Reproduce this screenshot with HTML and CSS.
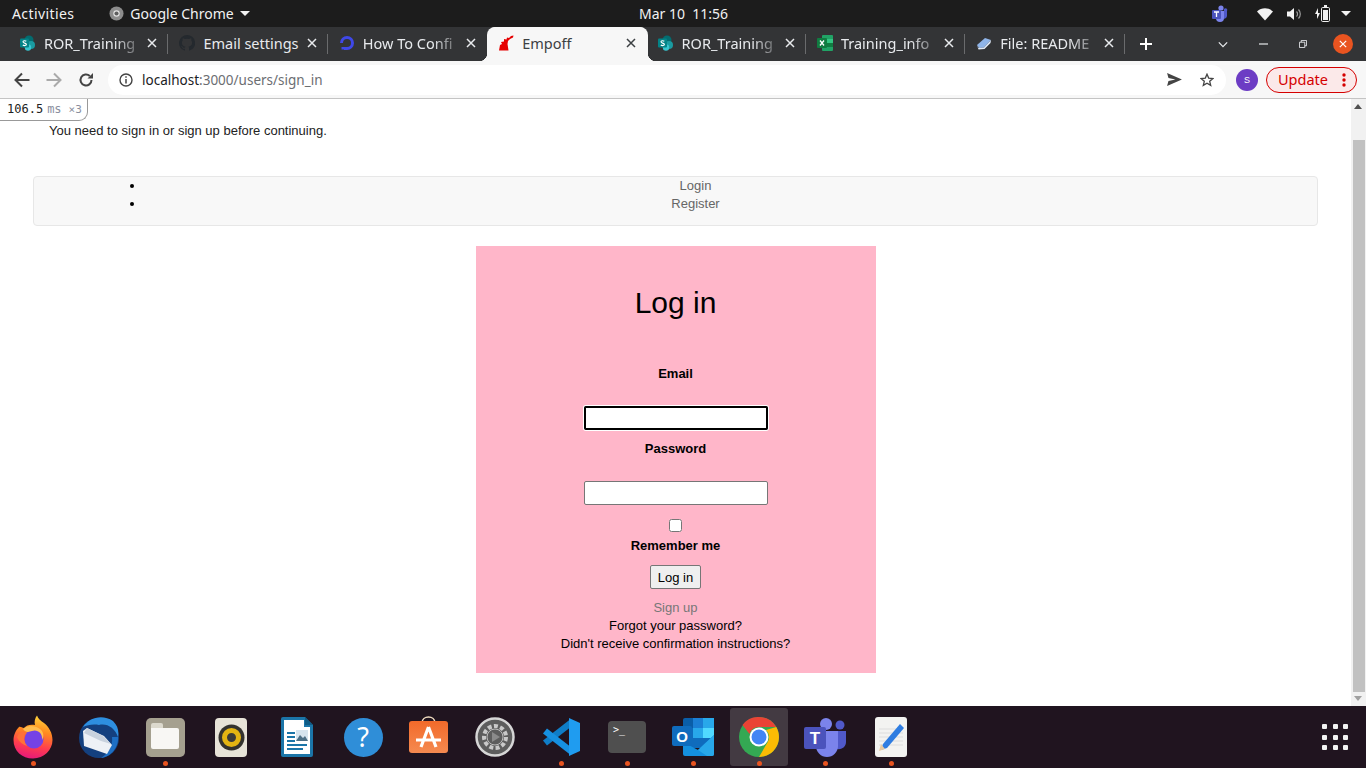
FILE: index.html
```html
<!DOCTYPE html>
<html lang="en">
<head>
    <meta charset="UTF-8">
    <meta name="viewport" content="width=device-width, initial-scale=1.0">
    <title>Empoff</title>
    <link rel="stylesheet" href="styles.css">
</head>
<body>
    <svg class="defs" width="0" height="0">
        <defs>
            <linearGradient id="ff-body" x1="0.6" y1="0" x2="0.4" y2="1">
                <stop offset="0" stop-color="#ffd23a"/>
                <stop offset="0.35" stop-color="#ff8a1f"/>
                <stop offset="0.7" stop-color="#ff3d4f"/>
                <stop offset="1" stop-color="#e5197a"/>
            </linearGradient>
            <linearGradient id="store-bag" x1="0" y1="0" x2="0" y2="1">
                <stop offset="0" stop-color="#f26a2a"/>
                <stop offset="1" stop-color="#f58a50"/>
            </linearGradient>
        </defs>
        <symbol id="fav-sharepoint" viewBox="0 0 16 16">
            <circle cx="9" cy="5" r="4.5" fill="#036c70"/>
            <circle cx="11" cy="10" r="4" fill="#1a9ba1"/>
            <circle cx="8" cy="12.5" r="3.2" fill="#37c6d0"/>
            <rect x="0" y="3.5" width="9" height="9" rx="1" fill="#038387"/>
            <path d="M6.300 6.200C5.300 5.400 3 5.500 3 6.800c0 1.600 3.400 1 3.400 2.700 0 1.300-2.400 1.400-3.600.5" stroke="#fff" stroke-width="1.100" fill="none"/>
        </symbol>
        <symbol id="icon-close" viewBox="0 0 10 10">
            <path d="M1 1l8 8M9 1l-8 8" stroke="currentColor" stroke-width="1.5" fill="none"/>
        </symbol>
    </svg>

    <div class="topbar">
        <span class="activities">Activities</span>
        <div class="app-menu">
            <svg width="15" height="15" viewBox="0 0 16 16"><circle cx="8" cy="8" r="7.5" fill="#8d8d8d"/><circle cx="8" cy="8" r="3.4" fill="#e4e4e4"/><circle cx="8" cy="8" r="2.2" fill="#5e5e5e"/></svg>
            <span>Google Chrome</span>
            <span class="caret"></span>
        </div>
        <div class="clock">Mar 10&nbsp;&nbsp;11:56</div>
        <div class="tray">
            <svg class="tray-teams" width="17" height="17" viewBox="0 0 17 17"><circle cx="10" cy="3" r="2.6" fill="#7b83eb"/><circle cx="14.5" cy="5" r="1.8" fill="#5059c9"/><path d="M11 6h5v5a3 3 0 0 1-5 2z" fill="#5059c9"/><path d="M5 6h8v7a4 4 0 0 1-8 0z" fill="#7b83eb"/><rect x="1" y="5" width="9" height="9" rx="1" fill="#4b53bc"/><path d="M3 7h5M5.500 7v5" stroke="#fff" stroke-width="1.300"/></svg>
            <svg class="tray-wifi" width="16" height="14" viewBox="0 0 16 14"><path d="M0 4.500C4.500 .2 11.500 .2 16 4.500L8 13.500z" fill="#f2f2f2"/></svg>
            <svg class="tray-sound" width="15" height="14" viewBox="0 0 15 14"><path d="M0 4.500h3L7 1v12L3 9.500H0z" fill="#f2f2f2"/><path d="M9.500 4.500a3.500 3.500 0 0 1 0 5M11.500 2.500a6.500 6.500 0 0 1 0 9" stroke="#9a9a9a" stroke-width="1.200" fill="none"/></svg>
            <svg class="tray-battery" width="15" height="17" viewBox="0 0 15 17"><path d="M3 3L0 9h2v5l3-6H3z" fill="#f2f2f2"/><rect x="6.500" y="2.500" width="8" height="14" rx="1.200" fill="none" stroke="#f2f2f2"/><rect x="9" y="0" width="3" height="2" fill="#f2f2f2"/><rect x="8" y="5" width="5" height="10" fill="#f2f2f2"/></svg>
            <span class="caret"></span>
        </div>
    </div>

    <div class="tabbar">
        <div class="tab">
            <svg class="favicon" width="16" height="16"><use href="#fav-sharepoint"/></svg>
            <span class="tab-title tab-fade">ROR_Training</span>
            <svg class="tab-close" width="10" height="10"><use href="#icon-close"/></svg>
        </div>
        <div class="tab">
            <svg class="favicon" width="16" height="16" viewBox="0 0 16 16"><path d="M8 0a8 8 0 0 0-2.500 15.600c.4.1.5-.2.5-.4v-1.400c-2.200.5-2.700-1-2.700-1-.4-.9-.9-1.200-.9-1.200-.7-.5.1-.5.1-.5.8.1 1.200.8 1.200.8.7 1.200 1.900.9 2.300.7.1-.5.300-.9.500-1.100-1.800-.2-3.600-.9-3.600-4 0-.9.300-1.600.8-2.100-.1-.2-.4-1 .1-2.100 0 0 .7-.2 2.200.8a7.600 7.600 0 0 1 4 0c1.500-1 2.200-.8 2.200-.8.4 1.100.2 1.900.1 2.100.5.600.8 1.300.8 2.100 0 3.100-1.900 3.800-3.700 4 .3.300.6.800.6 1.500v2.200c0 .2.100.5.600.4A8 8 0 0 0 8 0z" fill="#24292e"/></svg>
            <span class="tab-title">Email settings</span>
            <svg class="tab-close" width="10" height="10"><use href="#icon-close"/></svg>
        </div>
        <div class="tab">
            <svg class="favicon" width="16" height="16" viewBox="0 0 16 16"><path d="M8 15V12A4 4 0 1 0 4 8H1A7 7 0 1 1 8 15z" fill="#3f48e8"/><path d="M5 12h3v3H5zM2.500 12H5v2.500H2.500z" fill="#3f48e8"/></svg>
            <span class="tab-title tab-fade">How To Confi</span>
            <svg class="tab-close" width="10" height="10"><use href="#icon-close"/></svg>
        </div>
        <div class="tab tab-active">
            <svg class="favicon" width="16" height="16" viewBox="0 0 16 16"><path d="M1 15.500L2 10l2-1-1-2 3-.5V4l2.500.5L9 2.500l2 .5 2-2 2.500-.5-.5 2-3 1.500-2 2-.5 3 1 6.500z" fill="#e60000"/></svg>
            <span class="tab-title">Empoff</span>
            <svg class="tab-close" width="10" height="10"><use href="#icon-close"/></svg>
        </div>
        <div class="tab">
            <svg class="favicon" width="16" height="16"><use href="#fav-sharepoint"/></svg>
            <span class="tab-title tab-fade">ROR_Training</span>
            <svg class="tab-close" width="10" height="10"><use href="#icon-close"/></svg>
        </div>
        <div class="tab">
            <svg class="favicon" width="16" height="16" viewBox="0 0 16 16"><rect x="5" y="0" width="11" height="16" rx="1" fill="#21a366"/><rect x="10" y="4" width="6" height="4" fill="#33c481"/><rect x="10" y="8" width="6" height="4" fill="#107c41"/><rect x="0" y="3" width="10" height="10" rx="1" fill="#107c41"/><path d="M3 5.500l4 5M7 5.500l-4 5" stroke="#fff" stroke-width="1.300"/></svg>
            <span class="tab-title tab-fade">Training_info</span>
            <svg class="tab-close" width="10" height="10"><use href="#icon-close"/></svg>
        </div>
        <div class="tab">
            <svg class="favicon" width="16" height="16" viewBox="0 0 16 16"><path d="M1 10L9 3l6 2-7 7.500-5 .5z" fill="#8fb4e8"/><path d="M1 10l1.500 3 5.500-.5L15 5l-.5 3-6 6-6 .5z" fill="#dfe8f5"/></svg>
            <span class="tab-title tab-fade">File: README</span>
            <svg class="tab-close" width="10" height="10"><use href="#icon-close"/></svg>
        </div>
        <svg class="new-tab" width="14" height="14" viewBox="0 0 14 14"><path d="M7 1v12M1 7h12" stroke="#fff" stroke-width="2"/></svg>
        <div class="window-controls">
            <svg width="10" height="7" viewBox="0 0 12 8"><path d="M1 1.500l5 5 5-5" stroke="#e8eaed" stroke-width="1.500" fill="none"/></svg>
            <svg width="9" height="2" viewBox="0 0 9 2"><path d="M0 1h9" stroke="#e8eaed" stroke-width="1.200"/></svg>
            <svg width="8" height="8" viewBox="0 0 9 9"><path d="M.5 2.500h6v6h-6zM2.500 2.500v-2h6v6h-2" stroke="#e8eaed" fill="none"/></svg>
            <div class="win-close"><svg width="8" height="8"><use href="#icon-close"/></svg></div>
        </div>
    </div>

    <div class="toolbar">
        <svg class="nav-icon" width="16" height="16" viewBox="0 0 16 16"><path d="M15.500 8H2M8 1.500L1.500 8 8 14.500" stroke="#444" stroke-width="2" fill="none"/></svg>
        <svg class="nav-icon" width="16" height="16" viewBox="0 0 16 16"><path d="M.5 8H14M8 1.500L14.500 8 8 14.500" stroke="#aaa" stroke-width="2" fill="none"/></svg>
        <svg class="nav-icon" width="16" height="16" viewBox="0 0 16 16"><path d="M13.500 8A5.500 5.500 0 1 1 11.800 4" stroke="#444" stroke-width="2" fill="none"/><path d="M9.500 6.500H15V1z" fill="#444"/></svg>
        <div class="omnibox">
            <svg width="14" height="14" viewBox="0 0 14 14"><circle cx="7" cy="7" r="6" stroke="#444" stroke-width="1.400" fill="none"/><path d="M7 6v4.500M7 3.300v1.500" stroke="#444" stroke-width="1.500"/></svg>
            <span class="url"><span class="url-host">localhost</span>:3000/users/sign_in</span>
            <svg class="omni-send" width="15" height="13" viewBox="0 0 16 14"><path d="M0 0l16 7-16 7 1.500-5.500L9 7 1.500 5.500z" fill="#444"/></svg>
            <svg class="omni-star" width="14" height="14" viewBox="0 0 14 14"><path d="M7 1.200l1.700 3.900 4.200.4-3.200 2.800 1 4.100L7 10.200l-3.700 2.200 1-4.100L1.100 5.500l4.200-.4z" stroke="#444" stroke-width="1.300" fill="none"/></svg>
        </div>
        <div class="avatar">S</div>
        <div class="update-pill">
            <span class="update-label">Update</span>
            <svg width="4" height="14" viewBox="0 0 4 14"><circle cx="2" cy="2" r="1.700"/><circle cx="2" cy="7" r="1.700"/><circle cx="2" cy="12" r="1.700"/></svg>
        </div>
    </div>

    <div class="viewport">
        <div class="page">
            <div class="profiler"><b>106.5</b><span class="prof-unit">ms</span><small>×3</small></div>
            <p class="notice">You need to sign in or sign up before continuing.</p>
            <nav class="navbar">
                <ul>
                    <li><a href="#">Login</a></li>
                    <li><a href="#">Register</a></li>
                </ul>
            </nav>
            <div class="login-card">
                <h2>Log in</h2>
                <form class="login-form">
                    <label for="user_email">Email</label>
                    <input class="text-field is-focused" id="user_email" type="email">
                    <label for="user_password">Password</label>
                    <input class="text-field" id="user_password" type="password">
                    <input class="remember-box" id="user_remember" type="checkbox">
                    <label class="remember-label" for="user_remember">Remember me</label>
                    <input class="submit-btn" type="submit" value="Log in">
                </form>
                <div class="login-links">
                    <a class="link-muted" href="#">Sign up</a>
                    <a href="#">Forgot your password?</a>
                    <a href="#">Didn't receive confirmation instructions?</a>
                </div>
            </div>
        </div>
        <div class="scrollbar">
            <span class="arrow-up"></span>
            <div class="scroll-thumb"></div>
            <span class="arrow-down"></span>
        </div>
    </div>

    <div class="dock">
        <div class="dock-item running">
            <svg width="40" height="44" viewBox="0 0 40 44">
                <path d="M6 12C3 15 .5 20 .5 25c0 11 8.500 18.500 19.500 18.500S39.500 35 39.500 25c0-7-3.500-13-8.500-17-3-2-6-4-7-7.500-2 2.500-3 6.500-2 9.500-4-1-9 0-11 3-2-.5-4-2-5-1z" fill="url(#ff-body)"/>
                <path d="M4 22c2-5 6-6 8-4-2 4-1 10 3 13-5-1-9-4-11-9z" fill="#ff7139"/>
                <circle cx="21" cy="24" r="9.500" fill="#7542e5"/>
                <path d="M10 14c4-4 12-4 17 0 4 3 4 8 2 11 1-7-5-11-10-9-3 1-6 2-9-2z" fill="#ffbd4f"/>
            </svg>
        </div>
        <div class="dock-item">
            <svg width="44" height="44" viewBox="0 0 44 44">
                <circle cx="22" cy="23" r="20" fill="#14407f"/>
                <path d="M6 12C12 2 26-1 36 6c5 5 6 10 5 16-3-9-11-14-19-12-6-1-12 0-16 2z" fill="#2e8fe0"/>
                <path d="M41 22c1 10-7 20-17 21 8-5 12-13 11-21z" fill="#1e6fc4"/>
                <path d="M6 16l4-3 17 8 8 9-5 9-23-8z" fill="#eef1f6"/>
                <path d="M7 18l17 8 10 3-8-8-16-8z" fill="#c9d2de"/>
            </svg>
        </div>
        <div class="dock-item running">
            <div class="icon-files"><div class="folder"></div></div>
        </div>
        <div class="dock-item">
            <div class="icon-speaker"><div class="speaker-cone"></div></div>
        </div>
        <div class="dock-item">
            <svg width="32" height="40" viewBox="0 0 32 40">
                <path d="M2 0h22l8 8v30a2 2 0 0 1-2 2H2a2 2 0 0 1-2-2V2a2 2 0 0 1 2-2z" fill="#1b75a8"/>
                <path d="M3 3h20v7h6v27H3z" fill="#fff"/>
                <path d="M24 0l8 8h-8z" fill="#0f5b85"/>
                <rect x="6" y="15" width="8" height="2" fill="#1b75a8"/><rect x="6" y="19" width="8" height="2" fill="#1b75a8"/><rect x="6" y="23" width="8" height="2" fill="#1b75a8"/>
                <rect x="6" y="27" width="20" height="2" fill="#1b75a8"/><rect x="6" y="31" width="16" height="2" fill="#1b75a8"/>
                <rect x="15" y="13" width="12" height="11" fill="#d6e4ee"/>
                <path d="M15 24l4-6 3 3 2-2 3 5z" fill="#4c6f85"/>
            </svg>
        </div>
        <div class="dock-item">
            <div class="icon-help">?</div>
        </div>
        <div class="dock-item">
            <svg width="40" height="42" viewBox="0 0 40 42">
                <path d="M13 7c0-8 13-8 13 0" stroke="#f0dcc0" stroke-width="1.600" fill="none"/>
                <rect x="0" y="5" width="39" height="32" rx="3" fill="url(#store-bag)"/>
                <path d="M19.500 11L12 31M19.500 11L27 31M7 24h25" stroke="#fff" stroke-width="3.200" fill="none"/>
            </svg>
        </div>
        <div class="dock-item">
            <svg width="40" height="40" viewBox="0 0 40 40">
                <circle cx="20" cy="20" r="18.500" fill="#5d5d5d" stroke="#d6d6d6" stroke-width="2.500"/>
                <circle cx="20" cy="20" r="11" fill="none" stroke="#c9c9c9" stroke-width="4" stroke-dasharray="4 2.300"/>
                <circle cx="20" cy="20" r="8" fill="#5d5d5d" stroke="#bdbdbd"/>
                <path d="M17 15l8 5-8 5z" fill="#8a8a8a"/>
            </svg>
        </div>
        <div class="dock-item running">
            <svg width="38" height="38" viewBox="0 0 38 38">
                <path d="M30 4L3 25" stroke="#0f7dc7" stroke-width="6.500" fill="none"/>
                <path d="M3 13l27 21" stroke="#1690e0" stroke-width="6.500" fill="none"/>
                <path d="M27 0l11 5v28l-11 5z" fill="#1f9cf0"/>
            </svg>
        </div>
        <div class="dock-item running">
            <div class="icon-terminal">&gt;_</div>
        </div>
        <div class="dock-item running">
            <svg width="42" height="38" viewBox="0 0 42 38">
                <path d="M11 2a2 2 0 0 1 2-2h27a2 2 0 0 1 2 2v28H11z" fill="#0a5ea8"/>
                <rect x="21" y="0" width="10" height="10" fill="#1b7fd4"/>
                <rect x="31" y="0" width="11" height="10" fill="#28a8ea"/>
                <rect x="11" y="10" width="10" height="10" fill="#0f6cbd"/>
                <rect x="21" y="10" width="10" height="10" fill="#28a8ea"/>
                <rect x="31" y="10" width="11" height="10" fill="#50d9ff"/>
                <path d="M11 20h20v10H11zM31 20h11v-1L31 28z" fill="#0f6cbd"/>
                <path d="M11 24l15 8 16-15v19a2 2 0 0 1-2 2H13a2 2 0 0 1-2-2z" fill="#1490df"/>
                <path d="M42 17L26 32l9 6h5a2 2 0 0 0 2-2z" fill="#28a8ea"/>
                <rect x="0" y="8" width="20" height="20" rx="2" fill="#0f6cbd"/>
                <text x="10" y="24" text-anchor="middle" font-size="15" font-weight="700" font-family="Liberation Sans" fill="#fff">O</text>
            </svg>
        </div>
        <div class="dock-item running dock-active">
            <svg width="40" height="40" viewBox="0 0 40 40">
                <circle cx="20" cy="20" r="20" fill="#34a853"/>
                <path d="M20 0a20 20 0 0 1 17.300 10H20a10 10 0 0 0-9.500 7L3.500 8A20 20 0 0 1 20 0z" fill="#ea4335"/>
                <path d="M37.300 10A20 20 0 0 1 20 40l8.700-15A10 10 0 0 0 27 13z" fill="#fbbc04"/>
                <circle cx="20" cy="20" r="9.500" fill="#fff"/>
                <circle cx="20" cy="20" r="7.500" fill="#4285f4"/>
            </svg>
        </div>
        <div class="dock-item running">
            <svg width="42" height="40" viewBox="0 0 42 40">
                <circle cx="22" cy="7" r="6" fill="#7b83eb"/>
                <circle cx="36" cy="8" r="4.500" fill="#5059c9"/>
                <path d="M30 14h12v11a7 7 0 0 1-12 5z" fill="#5059c9"/>
                <path d="M12 14h22v15a11 11 0 0 1-22 0z" fill="#7b83eb"/>
                <rect x="0" y="10" width="22" height="22" rx="2" fill="#4b53bc"/>
                <text x="11" y="27" text-anchor="middle" font-size="17" font-weight="700" font-family="Liberation Sans" fill="#fff">T</text>
            </svg>
        </div>
        <div class="dock-item running">
            <svg width="32" height="40" viewBox="0 0 32 40">
                <rect width="32" height="40" rx="3" fill="#f3f3f1"/>
                <path d="M4 12h24M4 16h24M4 20h24M4 24h24M4 28h24" stroke="#ddd"/>
                <path d="M25 7l4 4-17 20-6 2 2-6z" fill="#2f7de1"/>
                <path d="M6 27l-2 7 6-2z" fill="#e8c9a0"/>
            </svg>
        </div>
        <div class="apps-grid">
            <span></span><span></span><span></span><span></span><span></span><span></span><span></span><span></span><span></span>
        </div>
    </div>
</body>
</html>
```

FILE: styles.css
```css
html, body {
    margin: 0;
    height: 100%;
    overflow: hidden;
}
body {
    display: flex;
    flex-direction: column;
    height: 768px;
    font-family: "Liberation Sans", Arial, sans-serif;
    background: #fff;
}
.defs {
    position: absolute;
    overflow: hidden;
}

/* gnome top bar */
.topbar {
    display: flex;
    align-items: center;
    flex: 0 0 27px;
    padding: 0 15px 0 12px;
    background: #1c1c1c;
    color: #f2f2f2;
    font-family: "Noto Sans", sans-serif;
    font-size: 14px;
}
.activities {
    letter-spacing: .4px;
}
.app-menu {
    display: flex;
    align-items: center;
    gap: 6px;
    margin-left: 35px;
}
.caret {
    flex: none;
    width: 0;
    height: 0;
    border-left: 5px solid transparent;
    border-right: 5px solid transparent;
    border-top: 5px solid #f2f2f2;
}
.clock {
    position: absolute;
    left: 639px;
    top: 4px;
}
.tray {
    display: flex;
    align-items: center;
    margin-left: auto;
}
.tray-teams { margin-right: 29px; }
.tray-wifi { margin-right: 14px; }
.tray-sound { margin-right: 13px; }
.tray-battery { margin-right: 11px; }

/* tabs */
.tabbar {
    display: flex;
    align-items: flex-end;
    flex: 0 0 34px;
    padding-left: 10px;
    background: #333436;
    color: #e8eaed;
    font-family: "Noto Sans", sans-serif;
    font-size: 14.500px;
}
.tab {
    display: flex;
    align-items: center;
    position: relative;
    width: 159.400px;
    height: 34px;
    box-sizing: border-box;
    padding: 0 12px 2px 10px;
}
.tab::after {
    content: "";
    position: absolute;
    right: 1px;
    top: 7px;
    height: 20px;
    width: 1px;
    background: #6a6b6d;
}
.tab:nth-child(3)::after {
    display: none;
}
.tab-active {
    background: #f7f7f7;
    color: #3c4043;
    border-radius: 8px 8px 0 0;
    box-shadow: -1px 0 0 #f7f7f7;
}
/* flared bottom corners of the current tab */
.tab-active::before,
.tab-active::after {
    content: "";
    position: absolute;
    top: auto;
    bottom: 0;
    width: 8px;
    height: 8px;
}
.tab-active::before {
    left: -9px;
    background: radial-gradient(circle at 0 0, transparent 8px, #f7f7f7 8.500px);
}
.tab-active::after {
    right: -8px;
    background: radial-gradient(circle at 100% 0, transparent 8px, #f7f7f7 8.500px);
}
.favicon {
    flex: none;
}
.tab-title {
    flex: 1;
    margin: 0 6px 0 8px;
    white-space: nowrap;
}
.tab-fade {
    -webkit-mask-image: linear-gradient(90deg, #000 72%, rgba(0, 0, 0, .15) 100%);
    mask-image: linear-gradient(90deg, #000 72%, rgba(0, 0, 0, .15) 100%);
}
.tab-close {
    flex: none;
}
.new-tab {
    margin: 0 0 10px 13px;
}
.window-controls {
    display: grid;
    grid-template-columns: repeat(4, 40px);
    justify-items: center;
    align-items: center;
    height: 22px;
    margin: 0 3px 6px auto;
}
.win-close {
    display: flex;
    align-items: center;
    justify-content: center;
    width: 20px;
    height: 20px;
    border-radius: 50%;
    background: #e95420;
    color: #fff;
}

/* address bar */
.toolbar {
    display: flex;
    align-items: center;
    flex: 0 0 37px;
    padding: 0 9px 0 14px;
    background: #f7f7f7;
    border-bottom: 1px solid #c4c4c4;
}
.nav-icon {
    margin-right: 16px;
}
.omnibox {
    display: flex;
    align-items: center;
    width: 1118px;
    height: 30px;
    box-sizing: border-box;
    margin: 0 0 0 -2px;
    padding: 0 12px 0 11px;
    border-radius: 15px;
    background: #fff;
}
.url {
    margin-left: 9px;
    color: #6b6e72;
    font-family: "Noto Sans", sans-serif;
    font-size: 13.500px;
}
.url-host {
    color: #202124;
}
.omni-send {
    margin-left: auto;
}
.omni-star {
    margin-left: 18px;
}
.avatar {
    width: 22px;
    height: 22px;
    margin-left: 10px;
    border-radius: 50%;
    background: #6c3cc4;
    color: #fff;
    font-size: 9px;
    line-height: 22px;
    text-align: center;
}
.update-pill {
    display: flex;
    align-items: center;
    justify-content: space-between;
    width: 91px;
    height: 26px;
    box-sizing: border-box;
    margin-left: 8px;
    padding: 0 10px 0 11px;
    border: 1px solid #d50000;
    border-radius: 13px;
    background: #fbe9e9;
    color: #d50000;
    fill: #d50000;
    font-family: "Noto Sans", sans-serif;
    font-size: 14.500px;
}
.update-label {
    margin-top: -2px;
}

/* page */
.viewport {
    display: flex;
    flex: 1;
    min-height: 0;
}
.page {
    position: relative;
    flex: 1;
    padding: 23px 33px 0;
    font-size: 13px;
    line-height: 18px;
    color: #000;
}
.profiler {
    position: absolute;
    left: 0;
    top: 0;
    width: 88px;
    height: 22px;
    box-sizing: border-box;
    padding: 0 0 0 7px;
    border: 1px solid #999;
    border-width: 0 1px 1px 0;
    border-radius: 0 0 9px 0;
    background: #fff;
    color: #8a8fa0;
    font-family: "DejaVu Sans Mono", monospace;
    font-size: 12px;
    line-height: 21px;
}
.profiler b {
    color: #222;
    font-weight: 400;
}
.prof-unit {
    margin-left: 4px;
}
.profiler small {
    margin-left: 7px;
    font-size: 11px;
}
.notice {
    margin: 0 0 36px 16px;
    color: #222;
}
.navbar {
    height: 50px;
    box-sizing: border-box;
    border: 1px solid #e7e7e7;
    border-radius: 4px;
    background: #f8f8f8;
}
.navbar ul {
    margin: 0;
    padding: 0 71px 0 111px;
    text-align: center;
}
.navbar a {
    color: #666;
    text-decoration: none;
}
.login-card {
    width: 400px;
    height: 427px;
    box-sizing: border-box;
    margin: 20px 0 0 443px;
    padding: 39px 1px 0 0;
    background: #ffb6c9;
    text-align: center;
}
.login-card h2 {
    margin: 0 0 44px;
    font-size: 30px;
    font-weight: 400;
    line-height: 36px;
}
.login-form {
    display: flex;
    flex-direction: column;
    align-items: center;
}
.login-form label {
    font-weight: 700;
}
.text-field {
    width: 184px;
    height: 24px;
    box-sizing: border-box;
    margin: 23px 0 10px 1px;
    padding: 1px 2px;
    border: 1px solid #767676;
    border-radius: 2px;
    background: #fff;
}
.is-focused {
    outline: 2px solid #000;
    outline-offset: -2px;
    box-shadow: 0 0 0 1px #fff;
}
.remember-box {
    width: 13px;
    height: 13px;
    margin: 4px 0 5px;
}
.remember-label {
    margin-bottom: 10px;
}
.submit-btn {
    width: 51px;
    height: 24px;
    box-sizing: border-box;
    padding: 0;
    border: 1px solid #767676;
    border-radius: 2px;
    background: #efefef;
    color: #000;
    font-family: "Liberation Sans", Arial, sans-serif;
    font-size: 13px;
}
.login-links {
    display: flex;
    flex-direction: column;
    margin-top: 10px;
}
.login-links a {
    color: #000;
    text-decoration: none;
}
.login-links .link-muted {
    color: #777;
}

.scrollbar {
    position: relative;
    flex: 0 0 15px;
    background: #f1f1f1;
}
.scroll-thumb {
    position: absolute;
    left: 2px;
    right: 1px;
    top: 41px;
    height: 552px;
    background: #c1c1c1;
}
.arrow-up,
.arrow-down {
    position: absolute;
    left: 3px;
    width: 0;
    height: 0;
    border-left: 4.500px solid transparent;
    border-right: 4.500px solid transparent;
}
.arrow-up {
    top: 5px;
    border-bottom: 5px solid #505050;
}
.arrow-down {
    bottom: 5px;
    border-top: 5px solid #a0a0a0;
}

/* dock */
.dock {
    display: flex;
    align-items: center;
    flex: 0 0 62px;
    background: #20141f;
}
.dock-item {
    display: flex;
    align-items: center;
    justify-content: center;
    position: relative;
    width: 66px;
    height: 62px;
}
.dock-item.running::after {
    content: "";
    position: absolute;
    left: 30.500px;
    top: 55px;
    width: 5px;
    height: 5px;
    border-radius: 50%;
    background: #e95420;
}
.dock-active::before {
    content: "";
    position: absolute;
    left: 4px;
    top: 2px;
    width: 58px;
    height: 58px;
    border-radius: 3px;
    background: #433a42;
}
.dock-active svg {
    position: relative;
}
.icon-files {
    display: flex;
    align-items: center;
    justify-content: center;
    width: 39px;
    height: 39px;
    border-radius: 5px;
    background: #a5a08f;
}
.folder {
    position: relative;
    width: 28px;
    height: 21px;
    margin-top: 3px;
    border-radius: 0 2px 2px 2px;
    background: #f8f7f4;
}
.folder::before {
    content: "";
    position: absolute;
    left: 0;
    top: -5px;
    width: 12px;
    height: 5px;
    border-radius: 2px 2px 0 0;
    background: #dcd9cd;
}
.icon-speaker {
    display: flex;
    align-items: center;
    justify-content: center;
    width: 32px;
    height: 39px;
    border-radius: 4px;
    background: #e7e3d8;
}
.speaker-cone {
    width: 9px;
    height: 9px;
    border: 5.500px solid #e3b412;
    border-radius: 50%;
    background: #3a3a38;
    box-shadow: 0 0 0 3.500px #33322e;
}
.icon-help {
    width: 39px;
    height: 39px;
    border-radius: 50%;
    background: #2f8ed8;
    color: #fff;
    font-family: "Noto Sans", sans-serif;
    font-size: 27px;
    line-height: 38px;
    text-align: center;
}
.icon-terminal {
    width: 38px;
    height: 32px;
    box-sizing: border-box;
    padding: 1px 5px;
    border-radius: 4px;
    background: #4f4f4f;
    color: #fff;
    font-family: "DejaVu Sans Mono", monospace;
    font-size: 10px;
    line-height: 16px;
}
.apps-grid {
    display: grid;
    grid-template-columns: repeat(3, 5px);
    gap: 5.500px;
    margin-left: 398px;
}
.apps-grid span {
    width: 5px;
    height: 5px;
    background: #f2f2f2;
    border-radius: 1px;
}
```
